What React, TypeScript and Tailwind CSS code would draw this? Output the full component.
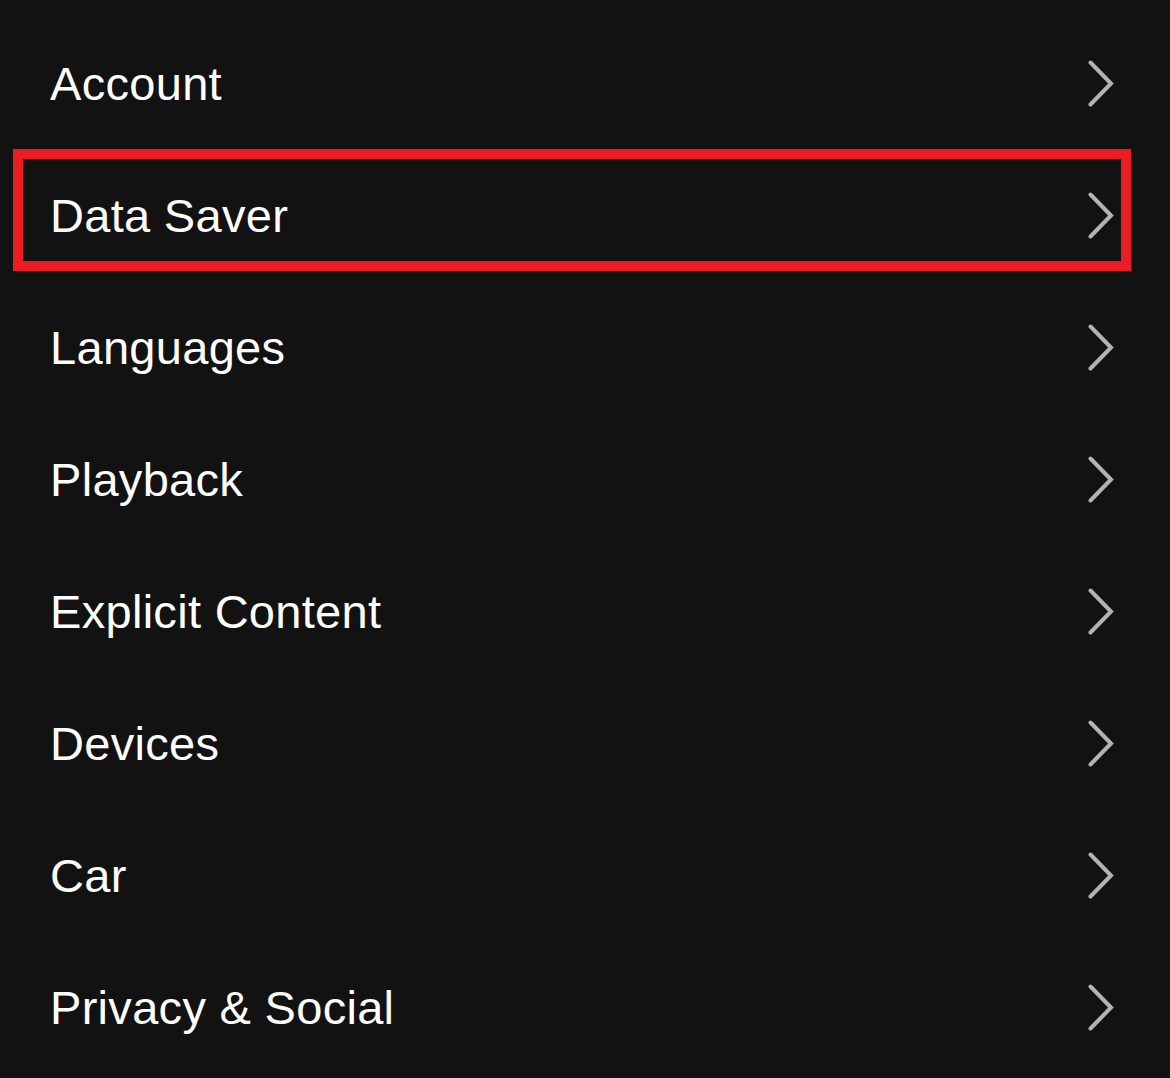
import React from "react";

const items = [
  "Account",
  "Data Saver",
  "Languages",
  "Playback",
  "Explicit Content",
  "Devices",
  "Car",
  "Privacy & Social",
];

function Chevron() {
  return (
    <svg width="26" height="47" viewBox="0 0 26 47" fill="none" className="shrink-0">
      <path
        d="M2.5 2.5 L23 23.5 L2.5 44.5"
        stroke="#b3b3b3"
        strokeWidth="4"
        strokeLinecap="round"
        strokeLinejoin="miter"
      />
    </svg>
  );
}

export default function App() {
  return (
    <div
      className="relative w-[1170px] h-[1078px] overflow-hidden bg-[#121212] pt-[17px]"
      style={{ fontFamily: "'Liberation Sans', Arial, sans-serif" }}
    >
      {items.map((label) => (
        <div key={label} className="flex h-[132px] items-center justify-between pl-[50px] pr-[56px]">
          <span className="text-[47px] leading-none text-white tracking-[0.3px]">{label}</span>
          <Chevron />
        </div>
      ))}
      <div className="pointer-events-none absolute left-[13px] top-[149px] h-[122px] w-[1118px] border-[10px] border-[#ec1c24]" />
    </div>
  );
}
